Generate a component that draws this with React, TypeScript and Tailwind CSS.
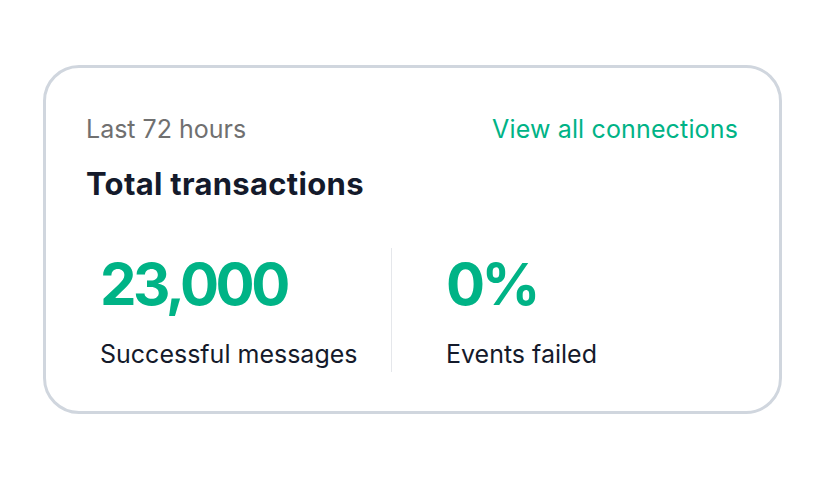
const Stat = ({ value, label, className }: { value: string; label: string; className: string }) => (
  <div className={className}>
    <div className="pt-[4px] text-[58px] leading-[64px] font-bold tracking-[-3.5px] text-[#00b386]">{value}</div>
    <div className="mt-[23px] pb-[3px] text-[25px] leading-[30px] text-[#141a2b]">{label}</div>
  </div>
);

export default function App() {
  return (
    <div className="min-h-screen bg-white pt-[65px] font-['Inter','Noto_Sans',sans-serif]">
      <div className="mx-auto w-[739px] h-[349px] rounded-[36px] border-[3px] border-[#d0d6de] bg-white pl-[40px] pr-[41px] pt-[46px]">
        <div className="flex items-baseline justify-between text-[25px] leading-[30px]">
          <span className="text-[#707070]">Last 72 hours</span>
          <a href="#" className="text-[#00b386] tracking-[0.15px]">View all connections</a>
        </div>
        <h2 className="mt-[21px] text-[31px] leading-[38px] font-bold tracking-[0.3px] text-[#141a2b]">Total transactions</h2>
        <div className="mt-[45px] flex">
          <Stat value="23,000" label="Successful messages" className="w-[306px] pl-[14px] border-r border-[#e5e7eb]" />
          <Stat value="0%" label="Events failed" className="pl-[54px]" />
        </div>
      </div>
    </div>
  );
}
